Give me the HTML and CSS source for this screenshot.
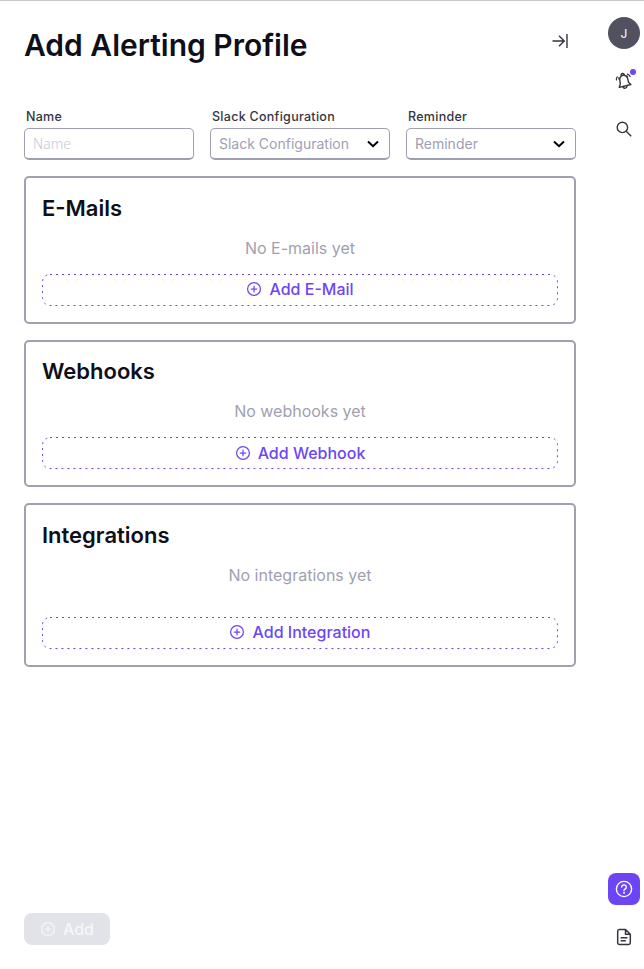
FILE: index.html
```html
<!DOCTYPE html>
<html lang="en">
<head>
<meta charset="utf-8">
<title>Add Alerting Profile</title>
<link rel="stylesheet" href="styles.css">
</head>
<body>
<svg class="defs" width="0" height="0">
  <symbol id="plus" viewBox="0 0 16 16"><g fill="none" stroke="currentColor" stroke-width="1.25" stroke-linecap="round"><circle cx="8" cy="8" r="6.4"/><path d="M8 5.2v5.6M5.2 8h5.6"/></g></symbol>
  <symbol id="chevron" viewBox="0 0 12 8"><path d="M1 1.5l5 4.7 5-4.7" fill="none" stroke="currentColor" stroke-width="2"/></symbol>
</svg>
<div class="app">
  <main class="panel">
    <header class="head">
      <h1>Add Alerting Profile</h1>
      <button class="collapse" aria-label="Close"><svg width="16" height="16" viewBox="0 0 16 16"><path d="M0.5 8h11.5M7 2.8L12.2 8 7 13.2M15 1v14" fill="none" stroke="currentColor" stroke-width="1.4"/></svg></button>
    </header>
    <div class="fields">
      <label class="field"><span class="label">Name</span><input class="control name" type="text" placeholder="Name"></label>
      <div class="field"><span class="label">Slack Configuration</span><div class="control select"><span>Slack Configuration</span><svg width="12" height="8"><use href="#chevron"/></svg></div></div>
      <div class="field"><span class="label">Reminder</span><div class="control select"><span>Reminder</span><svg width="12" height="8"><use href="#chevron"/></svg></div></div>
    </div>
    <section class="card">
      <h2>E-Mails</h2>
      <p>No E-mails yet</p>
      <button class="add"><svg class="dash" width="516" height="32"><rect x=".5" y=".5" width="515" height="31" rx="7.5"/></svg><svg width="16" height="16"><use href="#plus"/></svg>Add E-Mail</button>
    </section>
    <section class="card">
      <h2>Webhooks</h2>
      <p>No webhooks yet</p>
      <button class="add"><svg class="dash" width="516" height="32"><rect x=".5" y=".5" width="515" height="31" rx="7.5"/></svg><svg width="16" height="16"><use href="#plus"/></svg>Add Webhook</button>
    </section>
    <section class="card tall">
      <h2>Integrations</h2>
      <p>No integrations yet</p>
      <button class="add"><svg class="dash" width="516" height="32"><rect x=".5" y=".5" width="515" height="31" rx="7.5"/></svg><svg width="16" height="16"><use href="#plus"/></svg>Add Integration</button>
    </section>
    <button class="submit" disabled><svg width="16" height="16"><use href="#plus"/></svg>Add</button>
  </main>
  <aside class="rail">
    <div class="avatar">J</div>
    <button class="icon bell" aria-label="Notifications"><svg width="20" height="20" viewBox="0 0 20 20" fill="none" stroke="currentColor" stroke-width="1.4" stroke-linecap="round" stroke-linejoin="round"><path d="M5.2 16.4l11.7-2.9-2.4-2.3-.9-3.9a4 4 0 0 0-7.8 1.8l.5 3.9zM7.3 5.2l-.2-1a1.6 1.6 0 0 1 3.1-.7l.3 1M9.2 16.1a2 2 0 0 0 3.8-1"/><path d="M3.2 5.8a4.5 4.5 0 0 0-.8 3.2M4.9 6.6l-.1 1.5M13.3 3.1a5 5 0 0 1 2.8 2.5M12.7 4.9l1 1" stroke-width="1.2"/></svg><i class="dot"></i></button>
    <button class="icon" aria-label="Search"><svg width="16" height="16" viewBox="0 0 16 16" fill="none" stroke="currentColor" stroke-width="1.4"><circle cx="6.4" cy="6.4" r="5.2"/><path d="M10.2 10.2l5 5"/></svg></button>
    <button class="icon help" aria-label="Help"><svg width="18" height="18" viewBox="0 0 18 18" fill="none" stroke="currentColor" stroke-width="1.4" stroke-linecap="round"><circle cx="9" cy="9" r="7.6"/><path d="M6.7 7.1a2.3 2.2 0 1 1 3.6 1.8c-.8.5-1.3.8-1.3 1.6"/><circle cx="9" cy="12.8" r=".35"/></svg></button>
    <button class="icon" aria-label="Documentation"><svg width="16" height="18" viewBox="0 0 16 18" fill="none" stroke="currentColor" stroke-width="1.5" stroke-linejoin="round"><path d="M9.5 1.5H3.2A1.7 1.7 0 0 0 1.7 3v12a1.6 1.6 0 0 0 1.5 1.5h9.6a1.6 1.6 0 0 0 1.5-1.5V6.3zM9.5 1.5v4.8h4.8M4.6 9.7h6.8M4.6 12.8h5.2"/></svg></button>
  </aside>
</div>
</body>
</html>
```
FILE: styles.css
```css
* { box-sizing: border-box; }
body {
  margin: 0;
  background: #fff;
  color: #0f0f1a;
  font: 400 16px/24px Inter, sans-serif;
}
button { margin: 0; padding: 0; border: 0; background: none; font: inherit; color: inherit; }
svg { display: block; flex: none; }
.defs { position: absolute; }
.app { display: flex; height: 969px; border-top: 1px solid #c8c8c8; }
.panel { display: flex; flex-direction: column; width: 600px; padding: 24px 24px; }
.head { display: flex; justify-content: space-between; height: 84px; }
h1 { margin: 0; font-size: 30px; line-height: 40px; font-weight: 600; }
.collapse { width: 32px; height: 32px; display: grid; place-items: center; color: #353541; }
.fields { display: grid; grid-template-columns: 170px 180px 170px; gap: 16px; }
.label { display: block; height: 19px; padding-left: 2px; font-size: 12.5px; line-height: 16px; letter-spacing: .28px; font-weight: 500; color: #353541; }
.control {
  display: flex;
  width: 100%;
  height: 32px;
  padding: 0 8px;
  border: 1px solid #9f9fb1;
  border-bottom-width: 2px;
  border-radius: 5px;
  font: 400 14px/20px Inter, sans-serif;
}
.name { font-family: "Noto Sans", sans-serif; font-weight: 300; outline: 0; }
.name::placeholder { color: #c8c8d4; }
.select { align-items: center; justify-content: space-between; padding-right: 10.5px; color: #9f9fb1; }
.select svg { color: #000; }
.card { height: 147.5px; margin-top: 16px; padding: 13.9px 16px 16px; border: 2px solid #9fa1b0; border-radius: 5px; display: flex; flex-direction: column; }
.card.tall { height: 164px; }
h2 { margin: 0; font-size: 22px; line-height: 32px; font-weight: 600; }
.card:not(.tall) + .card:not(.tall) { padding-top: 13.4px; }
.card p { margin: 12px 0 0; text-align: center; color: #9f9fb1; }
.add { position: relative; display: flex; align-items: center; justify-content: center; gap: 7px; height: 32px; margin-top: auto; padding: 0 0 1px; font-weight: 500; color: #6e45f5; }
.card:nth-of-type(2) .add { padding-bottom: 0; }
.card.tall .add { gap: 8px; padding: 0 1px 2px 0; }
.dash { position: absolute; inset: 0; fill: none; stroke: #6e45f5; stroke-dasharray: 2 4; }
.submit { display: flex; align-items: center; justify-content: center; gap: 7px; width: 86px; height: 32px; margin-top: auto; border-radius: 8px; background: #e2e3e8; color: #f6f6f8; font-weight: 500; }
.rail { display: flex; flex-direction: column; gap: 16px; width: 44px; padding: 16px 4px 16px 8px; }
.avatar { width: 32px; height: 32px; border-radius: 50%; background: #51515f; color: #fff; font-size: 12px; line-height: 34px; text-align: center; }
.icon { position: relative; width: 32px; height: 32px; display: grid; place-items: center; color: #353541; }
.dot { position: absolute; right: 4px; top: 4px; width: 6px; height: 6px; border-radius: 50%; background: #6e45f5; }
.help { margin-top: auto; border-radius: 8px; background: #6e45f5; color: #fff; }
```
